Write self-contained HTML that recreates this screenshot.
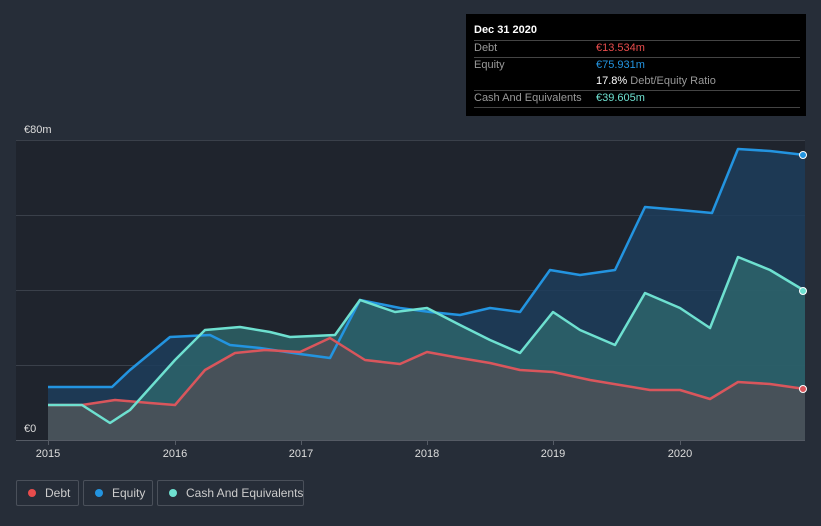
<!DOCTYPE html>
<html><head><meta charset="utf-8"><style>
body{margin:0;width:821px;height:526px;background:#262d38;font-family:"Liberation Sans",sans-serif;overflow:hidden;position:relative}
.tt{position:absolute;left:466px;top:14px;width:340px;height:102px;background:#000;color:#fff;font-size:11px}
.row{position:absolute;left:8px;width:326px;border-top:1px solid #444}
.lg{position:absolute;top:480px;height:26px;border:1px solid #4a505a;border-radius:2px;color:#ccc;font-size:12px;line-height:24px;box-sizing:border-box;white-space:nowrap}
.dot{display:inline-block;width:8px;height:8px;border-radius:50%;margin:0 9px 0 11px;vertical-align:0px}
</style></head><body>
<svg width="821" height="526" style="position:absolute;left:0;top:0">
<rect x="16" y="140" width="789" height="300" fill="#1f242d"/>
<g stroke="#3a404a" stroke-width="1">
<line x1="16" y1="140.5" x2="805" y2="140.5"/><line x1="16" y1="215.5" x2="805" y2="215.5"/><line x1="16" y1="290.5" x2="805" y2="290.5"/><line x1="16" y1="365.5" x2="805" y2="365.5"/></g>
<polygon fill="#1d3d5c" opacity="0.85" points="48,387 112,387 130,370 170,337 210,335 230,345 260,348 300,354 330,358 360,300 400,308 430,312 460,315 490,308 520,312 550,270 580,275 615,270 645,207 680,210 712,213 738,149 770,151 805,155 805,440 48,440"/>
<polygon fill="#2f6a6e" opacity="0.75" points="48,405 82,405 110,423 130,410 175,360 205,330 240,327 270,332 290,337 335,335 360,300 395,312 427,308 460,325 490,340 520,353 553,312 580,330 615,345 645,293 680,308 710,328 738,257 770,270 805,291 805,440 48,440"/>
<polygon fill="#4a5058" opacity="0.9" points="48,405 82,405 115,400 150,403 175,405 205,370 235,353 265,350 300,352 330,338 365,360 400,364 427,352 460,358 490,363 520,370 553,372 590,380 620,385 650,390 680,390 710,399 738,382 770,384 805,389 805,440 48,440"/>
<g fill="none" stroke-width="2.5" stroke-linejoin="round">
<polyline stroke="#2394e0" points="48,387 112,387 130,370 170,337 210,335 230,345 260,348 300,354 330,358 360,300 400,308 430,312 460,315 490,308 520,312 550,270 580,275 615,270 645,207 680,210 712,213 738,149 770,151 805,155"/>
<polyline stroke="#d9565c" points="48,405 82,405 115,400 150,403 175,405 205,370 235,353 265,350 300,352 330,338 365,360 400,364 427,352 460,358 490,363 520,370 553,372 590,380 620,385 650,390 680,390 710,399 738,382 770,384 805,389"/>
<polyline stroke="#6ee0d0" points="48,405 82,405 110,423 130,410 175,360 205,330 240,327 270,332 290,337 335,335 360,300 395,312 427,308 460,325 490,340 520,353 553,312 580,330 615,345 645,293 680,308 710,328 738,257 770,270 805,291"/>
</g>
<circle cx="803" cy="155" r="3.5" fill="#2394e0" stroke="#fff"/>
<circle cx="803" cy="291" r="3.5" fill="#6ee0d0" stroke="#fff"/>
<circle cx="803" cy="389" r="3.5" fill="#d9565c" stroke="#fff"/>
<line x1="16" y1="440.5" x2="805" y2="440.5" stroke="#555b65"/>
<g stroke="#555b65"><line x1="48.5" y1="440" x2="48.5" y2="445"/><line x1="175.5" y1="440" x2="175.5" y2="445"/><line x1="301.5" y1="440" x2="301.5" y2="445"/><line x1="427.5" y1="440" x2="427.5" y2="445"/><line x1="553.5" y1="440" x2="553.5" y2="445"/><line x1="680.5" y1="440" x2="680.5" y2="445"/></g>
<g fill="#ddd" font-size="11" text-anchor="middle" font-family="Liberation Sans">
<text x="48" y="457">2015</text><text x="175" y="457">2016</text><text x="301" y="457">2017</text><text x="427" y="457">2018</text><text x="553" y="457">2019</text><text x="680" y="457">2020</text></g>
<text x="24" y="133" fill="#ddd" font-size="11" font-family="Liberation Sans">€80m</text>
<text x="24" y="432" fill="#ddd" font-size="11" font-family="Liberation Sans">€0</text>
</svg>
<div class="tt">
<div style="position:absolute;left:8px;top:10px;font-weight:bold">Dec 31 2020</div>
<div class="row" style="top:26px"></div>
<div style="position:absolute;left:8px;top:28px;color:#999">Debt</div><div style="position:absolute;left:130px;top:28px;color:#e84c4c">€13.534m</div>
<div class="row" style="top:43px"></div>
<div style="position:absolute;left:8px;top:45px;color:#999">Equity</div><div style="position:absolute;left:130px;top:45px;color:#2394e0">€75.931m</div>
<div style="position:absolute;left:130px;top:61px;color:#999"><b style="color:#fff;font-weight:normal">17.8%</b> Debt/Equity Ratio</div>
<div class="row" style="top:76px"></div>
<div style="position:absolute;left:8px;top:78px;color:#999">Cash And Equivalents</div><div style="position:absolute;left:130px;top:78px;color:#6ee0d0">€39.605m</div>
<div class="row" style="top:93px"></div>
</div>
<div class="lg" style="left:16px;width:63px"><span class="dot" style="background:#e84c4c"></span>Debt</div>
<div class="lg" style="left:83px;width:70px"><span class="dot" style="background:#2394e0"></span>Equity</div>
<div class="lg" style="left:157px;width:147px"><span class="dot" style="background:#6ee0d0"></span>Cash And Equivalents</div>
</body></html>
